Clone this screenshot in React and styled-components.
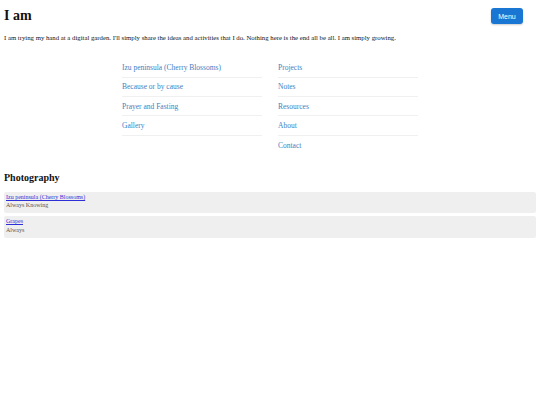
import React from "react";
import styled, { createGlobalStyle } from "styled-components";

const Global = createGlobalStyle`
  html, body { margin: 0; padding: 0; background: #fff; }
  body { margin: 4px; font-family: "Liberation Serif", "Times New Roman", serif; color: #111; }
`;

const Header = styled.header`
  display: flex;
  align-items: flex-start;
  justify-content: space-between;
`;

const Title = styled.h1`
  font-size: 14px;
  font-weight: bold;
  margin: 3px 0 0 0;
  line-height: 18px;
`;

const MenuButton = styled.button`
  margin: 4px 13px 0 0;
  background: #1976d2;
  color: #fff;
  border: none;
  border-radius: 3px;
  font-family: "Liberation Sans", Arial, sans-serif;
  font-size: 7px;
  height: 16px;
  width: 32px;
  padding: 0;
  box-shadow: 0 1px 2px rgba(0,0,0,0.2);
`;

const Intro = styled.p`
  font-size: 6.75px;
  margin: 7.5px 0 0 0;
  line-height: 9px;
`;

const Nav = styled.nav`
  display: grid;
  grid-template-columns: 140px 140px;
  column-gap: 16px;
  justify-content: center;
  margin: 17px 0 0 0;
`;

const Column = styled.ul`
  list-style: none;
  margin: 0;
  padding: 0;
  display: flex;
  flex-direction: column;
`;

const Item = styled.li`
  height: 19.3px;
  box-sizing: border-box;
  display: flex;
  align-items: center;
  border-bottom: ${(p) => (p.$last ? "none" : "1px solid #f0f0f0")};
`;

const NavLink = styled.a`
  color: #3d7fc4;
  text-decoration: none;
  font-size: 7.5px;
`;

const SectionTitle = styled.h2`
  font-size: 10px;
  font-weight: bold;
  margin: 17px 0 0 0;
  line-height: 12px;
`;

const Cards = styled.div`
  display: flex;
  flex-direction: column;
  gap: 3px;
  margin: 8px 0 0 0;
`;

const Card = styled.div`
  background: #efefef;
  border-radius: 2px;
  padding: 1px 2px;
  height: 21.5px;
  box-sizing: border-box;
  display: flex;
  flex-direction: column;
`;

const CardLink = styled.a`
  color: #2f2fd8;
  text-decoration: underline;
  font-size: 6px;
  line-height: 8.5px;
`;

const CardSub = styled.span`
  color: #555;
  font-size: 6px;
  line-height: 8.5px;
`;

const left = ["Izu peninsula (Cherry Blossoms)", "Because or by cause", "Prayer and Fasting", "Gallery"];
const right = ["Projects", "Notes", "Resources", "About", "Contact"];
const photos = [
  { title: "Izu peninsula (Cherry Blossoms)", sub: "Always Knowing" },
  { title: "Grapes", sub: "Always" },
];

export default function App() {
  return (
    <>
      <Global />
      <Header>
        <Title>I am</Title>
        <MenuButton>Menu</MenuButton>
      </Header>
      <Intro>
        I am trying my hand at a digital garden. I'll simply share the ideas and activities that I do. Nothing here is the end all be all. I am simply growing.
      </Intro>
      <Nav>
        <Column>
          {left.map((l) => (
            <Item key={l}><NavLink href="#">{l}</NavLink></Item>
          ))}
        </Column>
        <Column>
          {right.map((l, i) => (
            <Item key={l} $last={i === right.length - 1}><NavLink href="#">{l}</NavLink></Item>
          ))}
        </Column>
      </Nav>
      <SectionTitle>Photography</SectionTitle>
      <Cards>
        {photos.map((p) => (
          <Card key={p.title}>
            <CardLink href="#">{p.title}</CardLink>
            <CardSub>{p.sub}</CardSub>
          </Card>
        ))}
      </Cards>
    </>
  );
}
